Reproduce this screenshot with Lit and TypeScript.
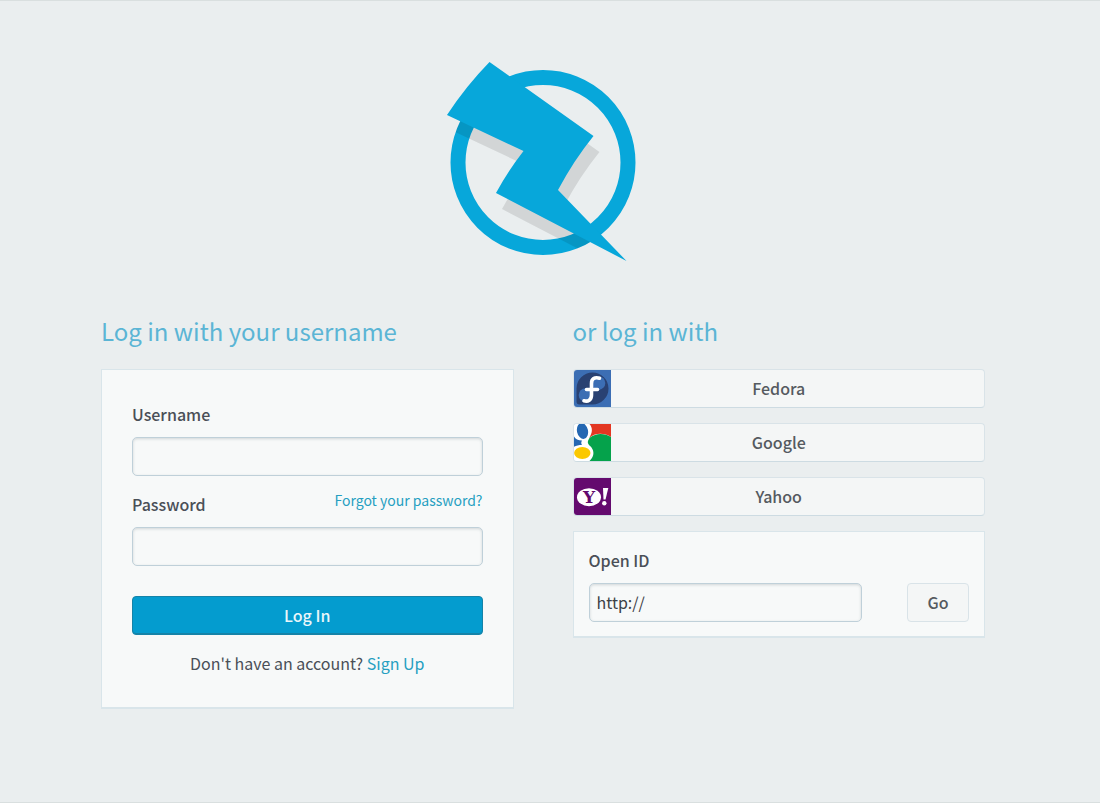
import { LitElement, html, css, svg } from "lit";
import { customElement } from "lit/decorators.js";

const fedoraIcon = html`<svg class="icon" viewBox="0 0 37 37" aria-hidden="true">
  <rect width="37" height="37" fill="#3c6eb4" />
  <path d="M18.5 2.500a16 16 0 1 1 0 32H5.500a3 3 0 0 1-3-3v-13a16 16 0 0 1 16-16z" fill="#294172" />
  <circle cx="24.500" cy="13" r="6.800" fill="#3c6eb4" />
  <circle cx="11.500" cy="25" r="6.800" fill="#3c6eb4" />
  <path d="M25.500 8.200c-5-1.500-8 .800-8 5.300v11.500c0 5-3.500 7-7.500 5.800" fill="none" stroke="#fff" stroke-width="3.600" stroke-linecap="round" />
  <path d="M12.500 19.500h11" stroke="#fff" stroke-width="3.600" stroke-linecap="round" />
</svg>`;

const googleIcon = html`<svg class="icon" viewBox="0 0 37 37" aria-hidden="true">
  <rect width="37" height="37" fill="#fff" />
  <path d="M15.500 0H37v13C30 8.500 21 8.500 15 14c3.500-5 4-10 .500-14z" fill="#e33722" />
  <path d="M37 13v24H15.500c5.500-5 5-11.500 0-15.500-2.500-2.500-2-5 .500-8 6-5 15-4.500 21-.500z" fill="#05a24b" />
  <path d="M0 12.500c1.500 2.500 4 4 8 4-1 1.500-1 3 0 4.500-3 0-6 .700-8 1.700z" fill="#2467b2" />
  <ellipse cx="8.500" cy="7" rx="5.500" ry="8" transform="rotate(-12 8.500 7)" fill="#2467b2" />
  <ellipse cx="8.300" cy="29" rx="8.200" ry="5.900" fill="#fbc800" />
</svg>`;

const yahooIcon = html`<svg class="icon" viewBox="0 0 37 37" aria-hidden="true">
  <rect width="37" height="37" fill="#640a6e" />
  <ellipse cx="15" cy="19.200" rx="12" ry="9" fill="#fff" />
  <text class="yahoo-y" x="15" y="25" text-anchor="middle" fill="#640a6e">Y</text>
  <path d="M29 10h5.300l-2.800 11.500h-2z" fill="#fff" />
  <circle cx="30.300" cy="25.300" r="2.200" fill="#fff" />
</svg>`;

const boltPath =
  "M489.500 62L593.500 136Q574 160 558 190L626.500 261L496 193Q508 171 523.500 151L447 115Q466 86 489.500 62Z";

const logo = html`<svg class="logo" viewBox="443 62 200 200" role="img" aria-label="Logo">
  ${svg`<defs><clipPath id="disc"><circle cx="543" cy="162.500" r="92.500" /></clipPath></defs>
  <circle cx="543" cy="162.500" r="85" fill="none" stroke="#07a7da" stroke-width="15" />
  <g clip-path="url(#disc)"><path d=${boltPath} transform="translate(6 16)" fill="#000" fill-opacity="0.100" /></g>
  <path d=${boltPath} fill="#07a7da" />`}
</svg>`;

const providers = [
  { name: "Fedora", icon: fedoraIcon },
  { name: "Google", icon: googleIcon },
  { name: "Yahoo", icon: yahooIcon },
];

@customElement("app-root")
export class AppRoot extends LitElement {
  static styles = css`
    :host {
      display: block;
      box-sizing: border-box;
      min-height: 100vh;
      padding: 61px 14px 60px 0;
      border-top: 1px solid #d9dfdf;
      border-bottom: 1px solid #d9dfdf;
      background: #eaeeef;
      color: #4a4f57;
      font-family: "Source Sans Pro", "Noto Sans CJK SC", "Noto Sans", sans-serif;
      font-size: 16px;
      line-height: 28px;
    }
    * {
      box-sizing: border-box;
    }
    .logo {
      display: block;
      width: 200px;
      height: 200px;
      margin: 0 auto 51px;
    }
    .columns {
      display: grid;
      grid-template-columns: 1fr 1fr;
      gap: 30px 59px;
      align-items: start;
      width: 90%;
      max-width: 884px;
      margin: 0 auto;
    }
    h2 {
      margin: 0 0 20px;
      color: #5bb5d5;
      font-size: 24px;
      font-weight: 400;
      line-height: 36px;
    }
    .panel {
      border: 1px solid #d9e5ea;
      border-bottom-width: 2px;
      background: #f7f9f9;
    }
    .login {
      padding: 30px;
    }
    .openid {
      padding: 14px 15px;
    }
    label {
      display: block;
      margin-bottom: 9px;
      font-weight: 500;
    }
    .label-row {
      display: flex;
      justify-content: space-between;
      margin-top: 14px;
    }
    a {
      color: #269fc1;
      text-decoration: none;
    }
    .forgot {
      font-size: 14px;
      line-height: 20px;
    }
    input {
      display: block;
      width: 100%;
      height: 39px;
      padding: 0 7px 2px;
      border: 1px solid #bfd0d9;
      border-radius: 5px;
      background: #f7f9f9;
      box-shadow: inset 0 1px 3px rgba(60, 80, 90, 0.2);
      color: #3c4046;
      font: inherit;
    }
    button {
      height: 39px;
      padding: 0 0 2px;
      border: 1px solid #d9e3e8;
      border-radius: 4px;
      background: #f4f6f6;
      color: #555a60;
      font: inherit;
      font-weight: 500;
      cursor: pointer;
    }
    .primary {
      display: block;
      width: 100%;
      margin: 30px 0 14px;
      border-color: #1583a8;
      background: #049ccf;
      box-shadow: inset 0 -1px 0 #1583a8;
      color: #e9f6fa;
    }
    p {
      margin: 0;
      text-align: center;
    }
    .providers {
      display: grid;
      gap: 15px;
      margin-bottom: 15px;
    }
    .provider {
      display: grid;
      align-items: center;
      overflow: hidden;
      padding: 0;
      border-bottom-color: #cddbe2;
    }
    .provider > * {
      grid-area: 1 / 1;
    }
    .provider span {
      padding-bottom: 2px;
    }
    .icon {
      display: block;
      width: 37px;
      height: 37px;
    }
    .yahoo-y {
      font: bold 17px "DejaVu Serif", serif;
    }
    .openid-row {
      display: flex;
      justify-content: space-between;
    }
    .openid-row input {
      width: 72%;
    }
    .go {
      width: 62px;
    }
    @media (max-width: 700px) {
      .columns {
        grid-template-columns: 1fr;
      }
    }
  `;

  render() {
    return html`
      ${logo}
      <main class="columns">
        <section>
          <h2>Log in with your username</h2>
          <form class="panel login" @submit=${(e: Event) => e.preventDefault()}>
            <label for="username">Username</label>
            <input id="username" type="text" autocomplete="username" />
            <div class="label-row">
              <label for="password">Password</label>
              <a class="forgot" href="#forgot">Forgot your password?</a>
            </div>
            <input id="password" type="password" autocomplete="current-password" />
            <button class="primary" type="submit">Log In</button>
            <p>Don't have an account? <a href="#signup">Sign Up</a></p>
          </form>
        </section>
        <section>
          <h2>or log in with</h2>
          <div class="providers">
            ${providers.map(
              (p) => html`<button class="provider" type="button">${p.icon}<span>${p.name}</span></button>`
            )}
          </div>
          <form class="panel openid" @submit=${(e: Event) => e.preventDefault()}>
            <label for="openid">Open ID</label>
            <div class="openid-row">
              <input id="openid" type="text" value="http://" />
              <button class="go" type="submit">Go</button>
            </div>
          </form>
        </section>
      </main>
    `;
  }
}
